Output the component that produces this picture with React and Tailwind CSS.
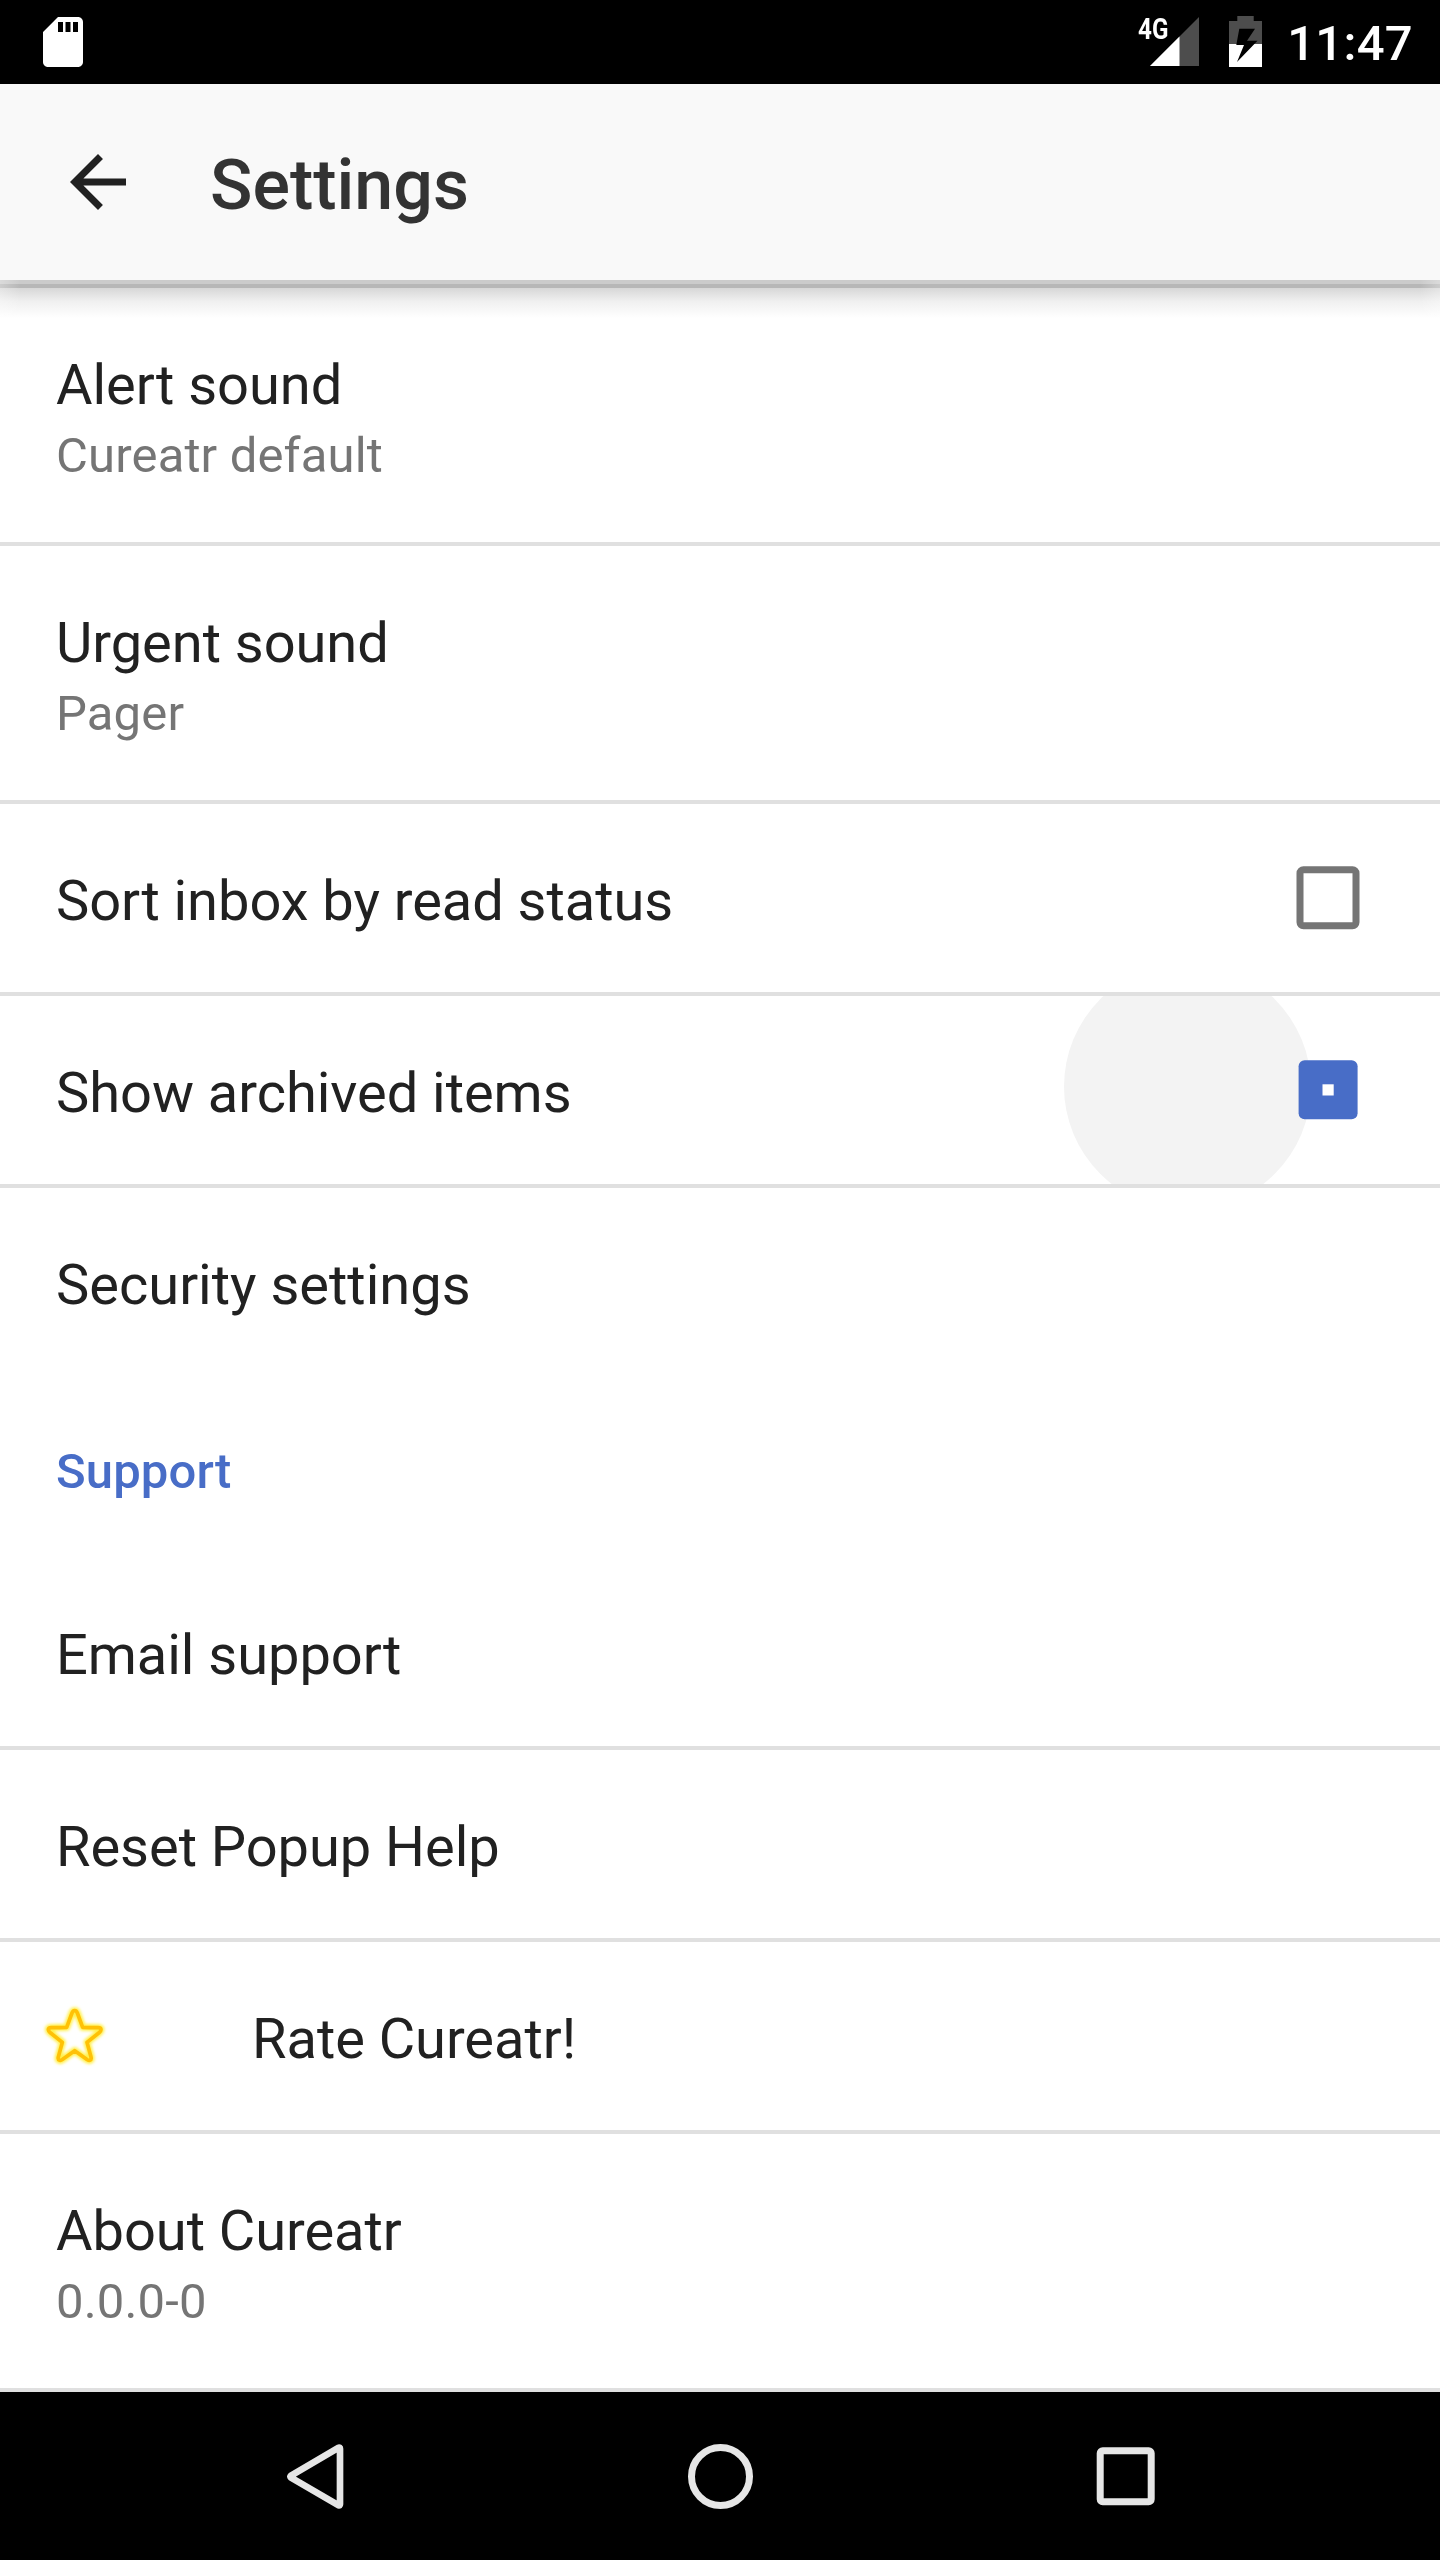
function StatusBar() {
  return (
    <div className="flex h-[84px] justify-between bg-black text-white">
      <svg className="mt-3 ml-[33px] size-[60px]" viewBox="0 0 24 24" fill="#fff">
        <path d="M18 2h-8L4 8v12c0 1.1.9 2 2 2h12c1.1 0 2-.9 2-2V4c0-1.1-.9-2-2-2zm-6 6h-2V4h2v4zm3 0h-2V4h2v4zm3 0h-2V4h2v4z" />
      </svg>
      <div className="flex pr-[27px]">
        <div className="relative mt-[17px] h-[49px] w-[62px]">
          <svg className="ml-[13px] h-[49px] w-[49px]" viewBox="0 0 49 49">
            <path d="M0 49L49 0v49z" fill="#4d4d4d" />
            <path d="M0 49L29.5 19.5V49z" fill="#fff" />
          </svg>
          <span className="absolute top-0 left-[0.5px] origin-left scale-x-[0.82] text-[29.5px] leading-[24px] font-bold">4G</span>
        </div>
        <svg className="mt-4 ml-[30px] h-[51px] w-[33px]" viewBox="0 0 33 51">
          <path d="M8.3 0h16.4v5H33v23H0V5h8.3z" fill="#4d4d4d" />
          <path d="M0 28h33v23H0z" fill="#fff" />
          <path d="M10.3 12.7H26l-8 12h10.5L8 46l7-17H7.3z" fill="#000" />
        </svg>
        <span className="mt-[15px] ml-[25px] text-[49px] leading-[57px] font-medium tracking-[0.3px]">11:47</span>
      </div>
    </div>
  );
}

function AppBar() {
  return (
    <header className="relative">
      <div className="flex h-[196px] items-center bg-[#f9f9f9]">
        <svg className="ml-[56px] size-[84px]" viewBox="0 0 24 24" fill="#212121">
          <path d="M20 11H7.83l5.59-5.59L12 4l-8 8 8 8 1.41-1.41L7.83 13H20v-2z" />
        </svg>
        <h1 className="ml-[70px] pt-[6px] text-[70px] leading-[82px] font-medium text-[#333]">Settings</h1>
      </div>
      <div className="h-1 bg-[#cbcbcb]" />
      <div className="h-1 bg-[#b7b7b7]" />
      <div className="absolute top-full left-0 h-[30px] w-full bg-linear-to-b from-[#d7d7d7] via-[#f0f0f0] via-45% to-white" />
      <div className="absolute top-[196px] left-0 h-[38px] w-5 bg-linear-to-r from-white/30 to-transparent" />
      <div className="absolute top-[196px] right-0 h-[38px] w-5 bg-linear-to-l from-white/30 to-transparent" />
    </header>
  );
}

function Row({ title, detail, leading, trailing, ripple }) {
  const height = detail ? "h-[258px]" : "h-[192px]";
  return (
    <div className={"relative flex shrink-0 overflow-hidden border-b-4 border-[#e0e0e0] pl-[56px] " + height}>
      {ripple && <div className="absolute top-[-33px] left-[1064px] size-[247px] rounded-full bg-[#f3f3f3]" />}
      {leading}
      <div className="relative pt-[64px]">
        <div className="text-[56px] leading-[66px] tracking-[-0.04px] text-[#212121]">{title}</div>
        {detail && <div className="mt-[9px] text-[49px] leading-[57px] tracking-[0.15px] text-[#757575]">{detail}</div>}
      </div>
      {trailing}
    </div>
  );
}

function Star() {
  return (
    <svg className="-ml-[26px] mt-[48px] h-[90px] w-[90px] shrink-0" viewBox="0 0 270 270" fill="none" strokeLinejoin="round">
      <defs>
        <filter id="glow" x="-20%" y="-20%" width="140%" height="140%">
          <feGaussianBlur stdDeviation="4" />
        </filter>
        <path
          id="star"
          d="M134 62q-5 0-8 7l-16 43q-22 1-46 1-9 0-9 6 0 4 7 10l35 28-12 44q-2 8 4 10 4 1 9-3l36-26 36 26q5 4 9 3 6-2 4-10l-12-44 35-28q7-6 7-10 0-6-9-6-24 0-46-1l-16-43q-3-7-8-7z"
        />
      </defs>
      <use href="#star" stroke="#fff04a" strokeWidth="21" filter="url(#glow)" />
      <use href="#star" stroke="#ffc107" strokeWidth="11" />
    </svg>
  );
}

function Checkbox({ ticking }) {
  return (
    <svg className="absolute top-[62px] left-[1296px] size-16" viewBox="0 0 64 64">
      {ticking ? (
        <>
          <rect x="2.6" y="2.3" width="59" height="59" rx="6" fill="#486dc7" />
          <rect x="26.5" y="26.3" width="11.2" height="11.2" fill="#fff" />
        </>
      ) : (
        <rect x="4" y="3.8" width="56" height="56" rx="3.5" fill="none" stroke="#757575" strokeWidth="7" />
      )}
    </svg>
  );
}

function NavBar() {
  return (
    <nav className="flex h-[168px] bg-black pl-[270px]">
      <svg className="mt-[38px] size-[100px]" viewBox="0 0 300 300" fill="none" stroke="#e6e6e6" strokeWidth="20" strokeLinejoin="round">
        <path d="M63 137L206 53q4-1 4 3v167q0 4-4 3L63 143q-3-3 0-6z" />
      </svg>
      <svg className="mt-[34px] ml-[300px] size-[100px]" viewBox="0 0 100 100" fill="none" stroke="#e6e6e6" strokeWidth="7">
        <circle cx="50.5" cy="50.5" r="29" />
      </svg>
      <svg className="mt-[38px] ml-[310px] size-[100px]" viewBox="0 0 100 100" fill="none" stroke="#e6e6e6" strokeWidth="7">
        <rect x="20.2" y="20.8" width="51" height="51" rx="2.5" />
      </svg>
    </nav>
  );
}

export default function App() {
  return (
    <div className="flex h-[2560px] w-[1440px] flex-col overflow-hidden bg-white font-[Roboto,sans-serif]">
      <StatusBar />
      <AppBar />
      <main className="flex flex-1 flex-col">
        <Row title="Alert sound" detail="Cureatr default" />
        <Row title="Urgent sound" detail="Pager" />
        <Row title="Sort inbox by read status" trailing={<Checkbox />} />
        <Row title="Show archived items" ripple trailing={<Checkbox ticking />} />
        <div className="h-[188px] pt-[64px] pl-[56px] text-[56px] leading-[66px] text-[#212121]">Security settings</div>
        <h2 className="h-[182px] pt-[67px] pl-[56px] text-[49px] leading-[57px] font-medium tracking-[0.12px] text-[#486dc7]">Support</h2>
        <Row title="Email support" />
        <Row title="Reset Popup Help" />
        <Row title={<span className="ml-[132px]">Rate Cureatr!</span>} leading={<Star />} />
        <Row title="About Cureatr" detail="0.0.0-0" />
      </main>
      <NavBar />
    </div>
  );
}
